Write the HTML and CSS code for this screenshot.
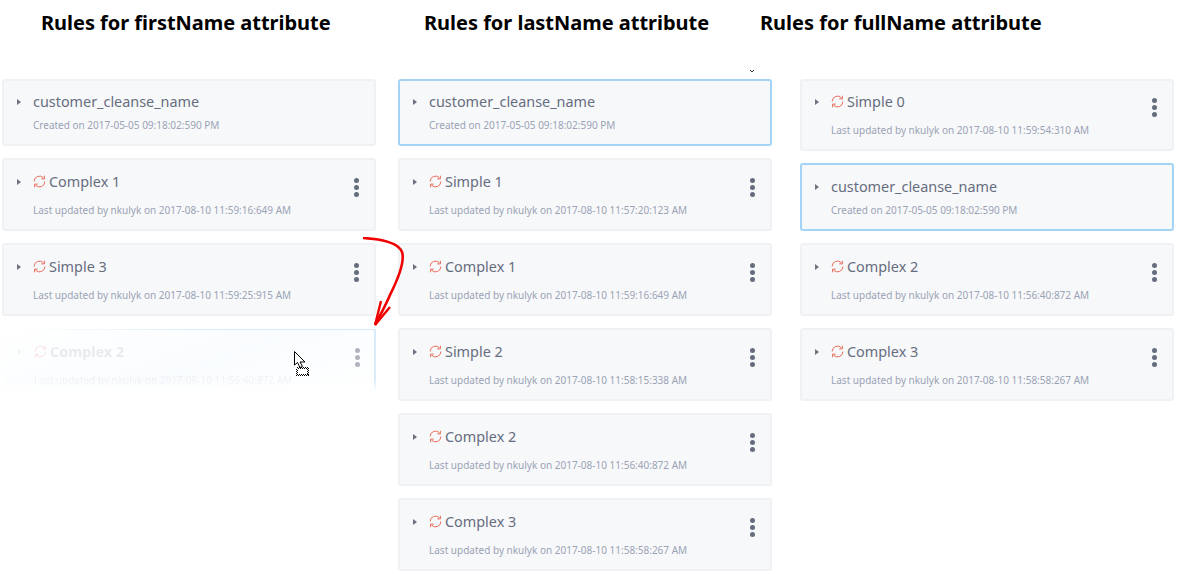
FILE: index.html
```html
<!DOCTYPE html>
<html lang="en">
<head>
<meta charset="utf-8">
<title>Rules</title>
<link rel="stylesheet" href="styles.css">
</head>
<body>
<svg class="defs" width="0" height="0" aria-hidden="true">
  <symbol id="sync" viewBox="0 0 14 14">
    <path d="M1.200 7A5.800 5.800 0 0 1 11.300 3.100" fill="none" stroke="currentColor" stroke-width="1"/>
    <path d="M12.800 7A5.800 5.800 0 0 1 2.700 10.900" fill="none" stroke="currentColor" stroke-width="1"/>
    <path d="M12.300 0.800V4.200H8.900" fill="none" stroke="currentColor" stroke-width="1"/>
    <path d="M1.700 13.200V9.800H5.100" fill="none" stroke="currentColor" stroke-width="1"/>
  </symbol>
</svg>
<main class="board">
  <section class="column">
    <h2 class="heading heading-first">Rules for firstName attribute</h2>
    <div class="stack">
      <article class="card base"><div class="head"><i class="caret"></i><span class="title">customer_cleanse_name</span></div><p class="meta">Created on 2017-05-05 09:18:02:590 PM</p></article>
      <article class="card"><div class="head"><i class="caret"></i><svg class="sync"><use href="#sync"/></svg><span class="title">Complex 1</span></div><p class="meta">Last updated by nkulyk on 2017-08-10 11:59:16:649 AM</p><div class="dots"><b></b><b></b><b></b></div></article>
      <article class="card"><div class="head"><i class="caret"></i><svg class="sync"><use href="#sync"/></svg><span class="title">Simple 3</span></div><p class="meta">Last updated by nkulyk on 2017-08-10 11:59:25:915 AM</p><div class="dots"><b></b><b></b><b></b></div></article>
      <article class="card ghost"><div class="head"><i class="caret"></i><svg class="sync"><use href="#sync"/></svg><span class="title">Complex 2</span></div><p class="meta">Last updated by nkulyk on 2017-08-10 11:56:40:872 AM</p><div class="dots"><b></b><b></b><b></b></div></article>
    </div>
  </section>
  <section class="column">
    <h2 class="heading heading-last">Rules for lastName attribute</h2>
    <div class="stack">
      <article class="card base active"><div class="head"><i class="caret"></i><span class="title">customer_cleanse_name</span></div><p class="meta">Created on 2017-05-05 09:18:02:590 PM</p></article>
      <article class="card"><div class="head"><i class="caret"></i><svg class="sync"><use href="#sync"/></svg><span class="title">Simple 1</span></div><p class="meta">Last updated by nkulyk on 2017-08-10 11:57:20:123 AM</p><div class="dots"><b></b><b></b><b></b></div></article>
      <article class="card"><div class="head"><i class="caret"></i><svg class="sync"><use href="#sync"/></svg><span class="title">Complex 1</span></div><p class="meta">Last updated by nkulyk on 2017-08-10 11:59:16:649 AM</p><div class="dots"><b></b><b></b><b></b></div></article>
      <article class="card"><div class="head"><i class="caret"></i><svg class="sync"><use href="#sync"/></svg><span class="title">Simple 2</span></div><p class="meta">Last updated by nkulyk on 2017-08-10 11:58:15:338 AM</p><div class="dots"><b></b><b></b><b></b></div></article>
      <article class="card"><div class="head"><i class="caret"></i><svg class="sync"><use href="#sync"/></svg><span class="title">Complex 2</span></div><p class="meta">Last updated by nkulyk on 2017-08-10 11:56:40:872 AM</p><div class="dots"><b></b><b></b><b></b></div></article>
      <article class="card"><div class="head"><i class="caret"></i><svg class="sync"><use href="#sync"/></svg><span class="title">Complex 3</span></div><p class="meta">Last updated by nkulyk on 2017-08-10 11:58:58:267 AM</p><div class="dots"><b></b><b></b><b></b></div></article>
    </div>
  </section>
  <section class="column column-third">
    <h2 class="heading heading-full">Rules for fullName attribute</h2>
    <div class="stack">
      <article class="card short"><div class="head"><i class="caret"></i><svg class="sync"><use href="#sync"/></svg><span class="title">Simple 0</span></div><p class="meta">Last updated by nkulyk on 2017-08-10 11:59:54:310 AM</p><div class="dots"><b></b><b></b><b></b></div></article>
      <article class="card base tall active"><div class="head"><i class="caret"></i><span class="title">customer_cleanse_name</span></div><p class="meta">Created on 2017-05-05 09:18:02:590 PM</p></article>
      <article class="card"><div class="head"><i class="caret"></i><svg class="sync"><use href="#sync"/></svg><span class="title">Complex 2</span></div><p class="meta">Last updated by nkulyk on 2017-08-10 11:56:40:872 AM</p><div class="dots"><b></b><b></b><b></b></div></article>
      <article class="card"><div class="head"><i class="caret"></i><svg class="sync"><use href="#sync"/></svg><span class="title">Complex 3</span></div><p class="meta">Last updated by nkulyk on 2017-08-10 11:58:58:267 AM</p><div class="dots"><b></b><b></b><b></b></div></article>
    </div>
  </section>
</main>
<svg class="arrow" viewBox="0 0 60 100" aria-hidden="true">
  <path d="M1 1C18 2 36 5 40 15C43 24 35 44 28 58C22 72 17 80 13 88" fill="none" stroke="#f00000" stroke-width="2.600"/>
  <path d="M13 88L19 64M13 88L28 70" fill="none" stroke="#f00000" stroke-width="2.400"/>
</svg>
<svg class="cursor" viewBox="0 0 16 26" aria-hidden="true">
  <rect class="cursor-box" x="2.500" y="16.500" width="12" height="8"/>
  <rect class="cursor-box" x="3.500" y="17.500" width="10" height="6"/>
  <path d="M0.500 0.500V14L3.500 11.500L6 16.500L8.500 15.500L6 11H11Z" fill="#fff" stroke="#000" stroke-width="1"/>
</svg>
<svg class="mini-caret" viewBox="0 0 6 4" aria-hidden="true"><path d="M1 1L3 3L5 1" fill="none" stroke="#333" stroke-width="1"/></svg>
</body>
</html>
```
FILE: styles.css
```css
* { box-sizing: border-box; }
html, body { margin: 0; padding: 0; background: #fff; }
body { width: 1183px; height: 574px; overflow: hidden; position: relative; font-family: "Noto Sans", "Open Sans", sans-serif; }
.defs { position: absolute; }
.board { display: flex; gap: 22px; padding-left: 2px; }
.column { width: 374px; flex: none; }
.column-third { margin-left: 6px; }
.heading { margin: 0; height: 79px; padding-top: 9px; font-size: 20px; line-height: 27px; font-weight: 700; color: #000; white-space: nowrap; font-family: "Noto Sans", sans-serif; }
.heading-first { padding-left: 39px; letter-spacing: -.03px; }
.heading-last { padding-left: 26px; letter-spacing: -.02px; }
.heading-full { margin-left: -40px; }
.stack { display: flex; flex-direction: column; gap: 12px; }
.card { position: relative; height: 73px; padding: 12px 29px 0 13px; background: #f7f8fa; border: 2px solid #f0f1f5; border-radius: 3px; }
.short { height: 72px; padding-top: 11px; }
.short .dots { top: 17px; }
.base { height: 67px; padding-top: 11px; }
.tall { height: 68px; padding-top: 12px; }
.active { border-color: #a3d4f5; }
.head { display: flex; align-items: center; height: 20px; }
.caret { width: 0; height: 0; border-left: 4px solid #6b7280; border-top: 3.5px solid transparent; border-bottom: 3.5px solid transparent; margin-right: 12px; flex: none; }
.sync { width: 13px; height: 13px; color: #e8604c; margin: -2px 3px 0 0; flex: none; }
.title { font-size: 14.4px; line-height: 20px; color: #666d7e; white-space: nowrap; }
.meta { margin: 11px 0 0 16px; font-size: 10px; line-height: 14px; color: #9aa3b5; white-space: nowrap; }
.base .meta { margin-top: 6px; }
.short .meta { margin-top: 11px; }
.dots { position: absolute; right: 15px; top: 18px; display: flex; flex-direction: column; gap: 2px; }
.dots b { display: block; width: 5px; height: 5px; border-radius: 50%; background: #666d7e; }
.ghost { height: 62px; margin-top: 1px; background: linear-gradient(90deg, #ffffff 5%, #d4eaf8 60%) top / 100% 1px no-repeat, linear-gradient(160deg, #ffffff 0%, #f9fcfe 55%, #ffffff 100%); border: 0; border-right: 2px solid #d9ecf9; border-radius: 0; padding: 13px 29px 0 16px; -webkit-mask-image: linear-gradient(180deg, #000 82%, transparent 100%); mask-image: linear-gradient(180deg, #000 82%, transparent 100%); }
.ghost .caret { opacity: .08; }
.ghost .sync { opacity: .2; }
.ghost .title { opacity: .13; font-weight: 700; }
.ghost .meta { opacity: .13; }
.ghost .dots { opacity: .5; top: 19px; right: 14px; }
.arrow { position: absolute; left: 362px; top: 237px; width: 60px; height: 100px; }
.cursor { position: absolute; left: 294px; top: 351px; width: 16px; height: 26px; }
.cursor-box { fill: #fff; stroke: #000; stroke-width: 1; stroke-dasharray: 1 1; shape-rendering: crispEdges; }
.mini-caret { position: absolute; left: 749px; top: 69px; width: 6px; height: 4px; }
```
